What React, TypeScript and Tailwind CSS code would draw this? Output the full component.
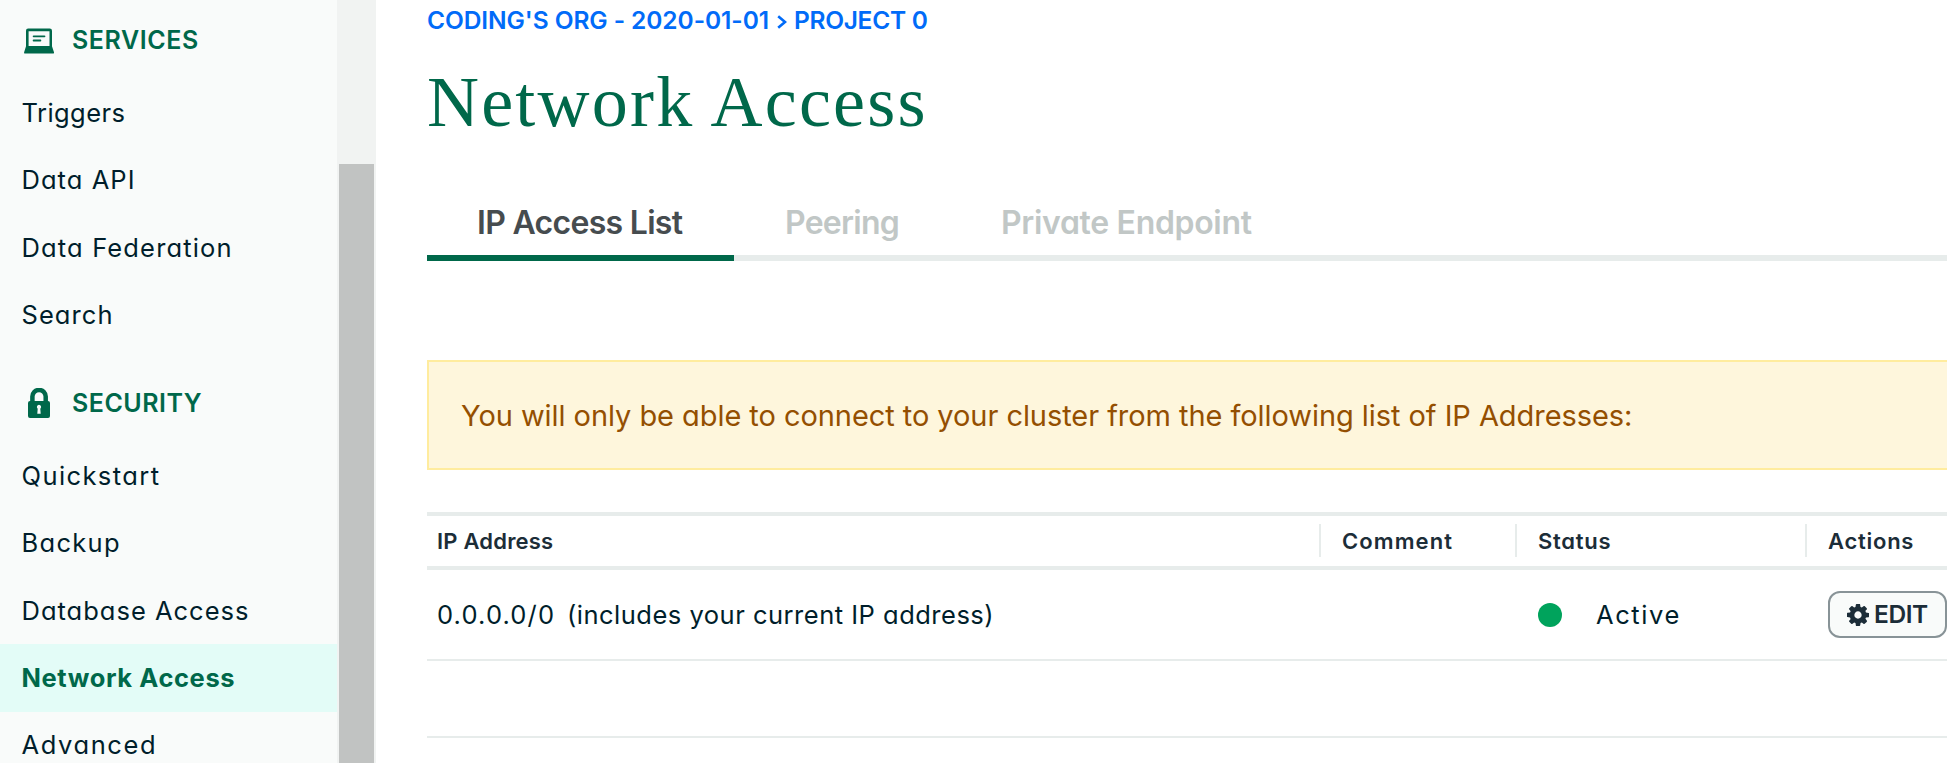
import type { ReactNode } from "react";

type NavItem = { label: string; tracking: string; active?: boolean };

const services: NavItem[] = [
  { label: "Triggers", tracking: "tracking-[0.44px]" },
  { label: "Data API", tracking: "tracking-[1.05px]" },
  { label: "Data Federation", tracking: "tracking-[1.15px]" },
  { label: "Search", tracking: "tracking-[1.07px]" },
];

const security: NavItem[] = [
  { label: "Quickstart", tracking: "tracking-[1.41px]" },
  { label: "Backup", tracking: "tracking-[1.29px]" },
  { label: "Database Access", tracking: "tracking-[1px]" },
  { label: "Network Access", tracking: "tracking-[0.6px]", active: true },
  { label: "Advanced", tracking: "tracking-[1.6px]" },
];

function LaptopIcon() {
  return (
    <svg className="h-[26px] w-[30px]" viewBox="24 27.5 30 26" fill="#00684a">
      <path
        fillRule="evenodd"
        d="M28.5 28h21.2a2.3 2.3 0 0 1 2.3 2.3V46H26V30.300a2.300 2.300 0 0 1 2.500-2.300zM28.600 30.700v14.800h20.900V30.700z"
      />
      <path d="M26.100 45.400h25.800l2 6a1.200 1.200 0 0 1-1.200 1.600H25.400a1.200 1.200 0 0 1-1.200-1.600z" />
      <path d="M33.600 35.800h10.900M33.600 40h6.800" stroke="#00684a" strokeWidth="1.8" strokeLinecap="round" />
    </svg>
  );
}

function LockIcon() {
  return (
    <svg className="h-[30px] w-[30px]" viewBox="24 388 30 30">
      <path d="M32.400 402.500v-5.900a6.650 6.650 0 0 1 13.300 0v5.900" fill="none" stroke="#00684a" strokeWidth="4.500" />
      <path
        fill="#00684a"
        fillRule="evenodd"
        d="M30 401h18a2 2 0 0 1 2 2v13a2 2 0 0 1-2 2H30a2 2 0 0 1-2-2v-13a2 2 0 0 1 2-2zM39 404.800a2.200 2.200 0 0 0-1.300 3.900l-.400 5.100h3.400l-.400-5.100a2.200 2.200 0 0 0-1.300-3.900z"
      />
    </svg>
  );
}

function GearIcon() {
  return (
    <svg className="size-[22px] shrink-0" viewBox="128 128 1536 1536" fill="currentColor">
      <path d="M1152 896q0-106-75-181t-181-75-181 75-75 181 75 181 181 75 181-75 75-181zm512-109v222q0 12-8 23t-20 13l-185 28q-19 54-39 91 35 50 107 138 10 12 10 25t-9 23q-27 37-99 108t-94 71q-12 0-26-9l-138-108q-44 23-91 38-16 136-29 186-7 28-36 28h-222q-14 0-24.500-8.500t-11.500-21.500l-28-184q-49-16-90-37l-141 107q-10 9-25 9-14 0-25-11-126-114-165-168-7-10-7-23 0-12 8-23 15-21 51-66.500t54-70.500q-27-50-41-99l-183-27q-13-2-21-12.500t-8-23.500v-222q0-12 8-23t19-13l186-28q14-46 39-92-40-57-107-138-10-12-10-24 0-10 9-23 26-36 98.500-107.500t94.500-71.500q13 0 26 10l138 107q44-23 91-38 16-136 29-186 7-28 36-28h222q14 0 24.500 8.500t11.500 21.500l28 184q49 16 90 37l142-107q9-9 24-9 13 0 25 10 129 119 165 170 7 8 7 22 0 12-8 23-15 21-51 66.500t-54 70.500q26 50 41 98l183 28q13 2 21 12.500t8 23.500z" />
    </svg>
  );
}

function NavHeading({ icon, className, children }: { icon: ReactNode; className: string; children: ReactNode }) {
  return (
    <div className={`flex h-[79px] shrink-0 items-center gap-[18px] pl-6 text-[25px] leading-none font-semibold text-[#00684a] ${className}`}>
      {icon}
      <span>{children}</span>
    </div>
  );
}

function NavList({ items }: { items: NavItem[] }) {
  return (
    <ul className="shrink-0">
      {items.map((item) => (
        <li
          key={item.label}
          className={`flex h-[67.4px] items-center pl-[21.5px] text-[25.5px] leading-none whitespace-nowrap ${item.tracking} ${
            item.active ? "bg-[#e3fcf7] font-bold text-[#00684a]" : "font-[390] text-[#001e2b]"
          }`}
        >
          {item.label}
        </li>
      ))}
    </ul>
  );
}

function HeaderCell({ className, children }: { className: string; children: ReactNode }) {
  return <div className={`mt-2 flex h-[33px] items-center ${className}`}>{children}</div>;
}

export default function App() {
  return (
    <div className="flex h-[763px] w-full overflow-hidden bg-white font-['Inter','Liberation_Sans',sans-serif] [font-feature-settings:'cv11']">
      <aside className="flex w-[376px] shrink-0 bg-[#f9fbfa]">
        <nav className="flex h-full w-[337px] flex-col overflow-hidden">
          <NavHeading icon={<LaptopIcon />} className="pt-[2px] tracking-[0.6px]">
            SERVICES
          </NavHeading>
          <NavList items={services} />
          <NavHeading icon={<LockIcon />} className="mt-[14.4px] pt-[2px] tracking-[0.5px]">
            SECURITY
          </NavHeading>
          <NavList items={security} />
        </nav>
        <div className="w-[39px] bg-[#f1f3f2] px-[2px] pt-[164px]">
          <div className="h-full bg-[#c1c3c2]" />
        </div>
      </aside>

      <main className="min-w-0 flex-1 overflow-hidden pl-[51px]">
        <div className="flex h-10 items-center text-[24.5px] leading-none font-semibold whitespace-nowrap text-[#016bf8]">
          <span className="w-[350px] tracking-[-0.08px]">CODING'S ORG - 2020-01-01</span>
          <svg className="mt-1 h-[14px] w-[10px]" viewBox="0 0 10 14" fill="none" stroke="currentColor" strokeWidth="2.600">
            <path d="M1.200 1.200 8 7 1.200 12.800" />
          </svg>
          <span className="pl-[7px] tracking-[-0.3px]">PROJECT 0</span>
        </div>
        <h1 className="flex h-[120px] items-center pt-[3px] font-['Liberation_Serif',serif] text-[72px] leading-none tracking-[2.2px] whitespace-nowrap text-[#00684a]">
          Network Access
        </h1>

        <div className="flex h-[101px] text-[32px] leading-none font-semibold whitespace-nowrap text-[#c1c7c6]">
          <div className="flex w-[307px] items-center border-b-[6px] border-[#00684a] pt-[31px] pl-[50px] tracking-[-0.7px] text-[#464c4f]">
            IP Access List
          </div>
          <div className="flex w-[216px] items-center border-b-[6px] border-[#e7eceb] pt-[31px] pl-[51px] tracking-[-0.75px]">Peering</div>
          <div className="flex flex-1 items-center border-b-[6px] border-[#e7eceb] pt-[31px] pl-[51px] tracking-[-0.32px]">
            Private Endpoint
          </div>
        </div>

        <div className="mt-[99px] flex h-[110px] items-center border-2 border-r-0 border-[#ffec9e] bg-[#fef6dc] pt-[1px] pl-[32px] text-[29px] leading-none tracking-[-0.06px] whitespace-nowrap text-[#944f01]">
          You will only be able to connect to your cluster from the following list of IP Addresses:
        </div>

        <div className="mt-[42px] text-[#001e2b]">
          <div className="grid h-[58px] grid-cols-[892px_196px_290px_1fr] border-y-4 border-[#e7eceb] text-[22px] leading-none font-semibold text-[#1c2d38]">
            <HeaderCell className="pl-[10px] tracking-[0.2px]">IP Address</HeaderCell>
            <HeaderCell className="border-l-2 border-[#e7eceb] pl-[21px] tracking-[1.1px]">Comment</HeaderCell>
            <HeaderCell className="border-l-2 border-[#e7eceb] pl-[21px] tracking-[0.75px]">Status</HeaderCell>
            <HeaderCell className="border-l-2 border-[#e7eceb] pl-[21px] tracking-[0.75px]">Actions</HeaderCell>
          </div>
          <div className="grid h-[91px] grid-cols-[892px_196px_290px_1fr] items-center border-b-2 border-[#e7eceb] text-[25.5px] leading-none font-[390] whitespace-nowrap">
            <div className="flex pl-[10px]">
              <span className="w-[130px] tracking-[1.15px]">0.0.0.0/0</span>
              <span className="tracking-[0.5px]">(includes your current IP address)</span>
            </div>
            <div />
            <div className="flex items-center gap-[34px] pl-[23px]">
              <span className="size-6 rounded-full bg-[#00a35c]" />
              <span className="tracking-[1.6px]">Active</span>
            </div>
            <div className="pl-[23px]">
              <button className="flex h-[47px] w-[119px] items-center gap-[5px] rounded-[12px] border-2 border-[#889397] bg-[#f9fbfa] pl-[17px] text-[24.5px] font-semibold tracking-[-0.4px] text-[#1c2d38]">
                <GearIcon />
                EDIT
              </button>
            </div>
          </div>
          <div className="h-[77px] border-b-2 border-[#e7eceb]" />
        </div>
      </main>
    </div>
  );
}
